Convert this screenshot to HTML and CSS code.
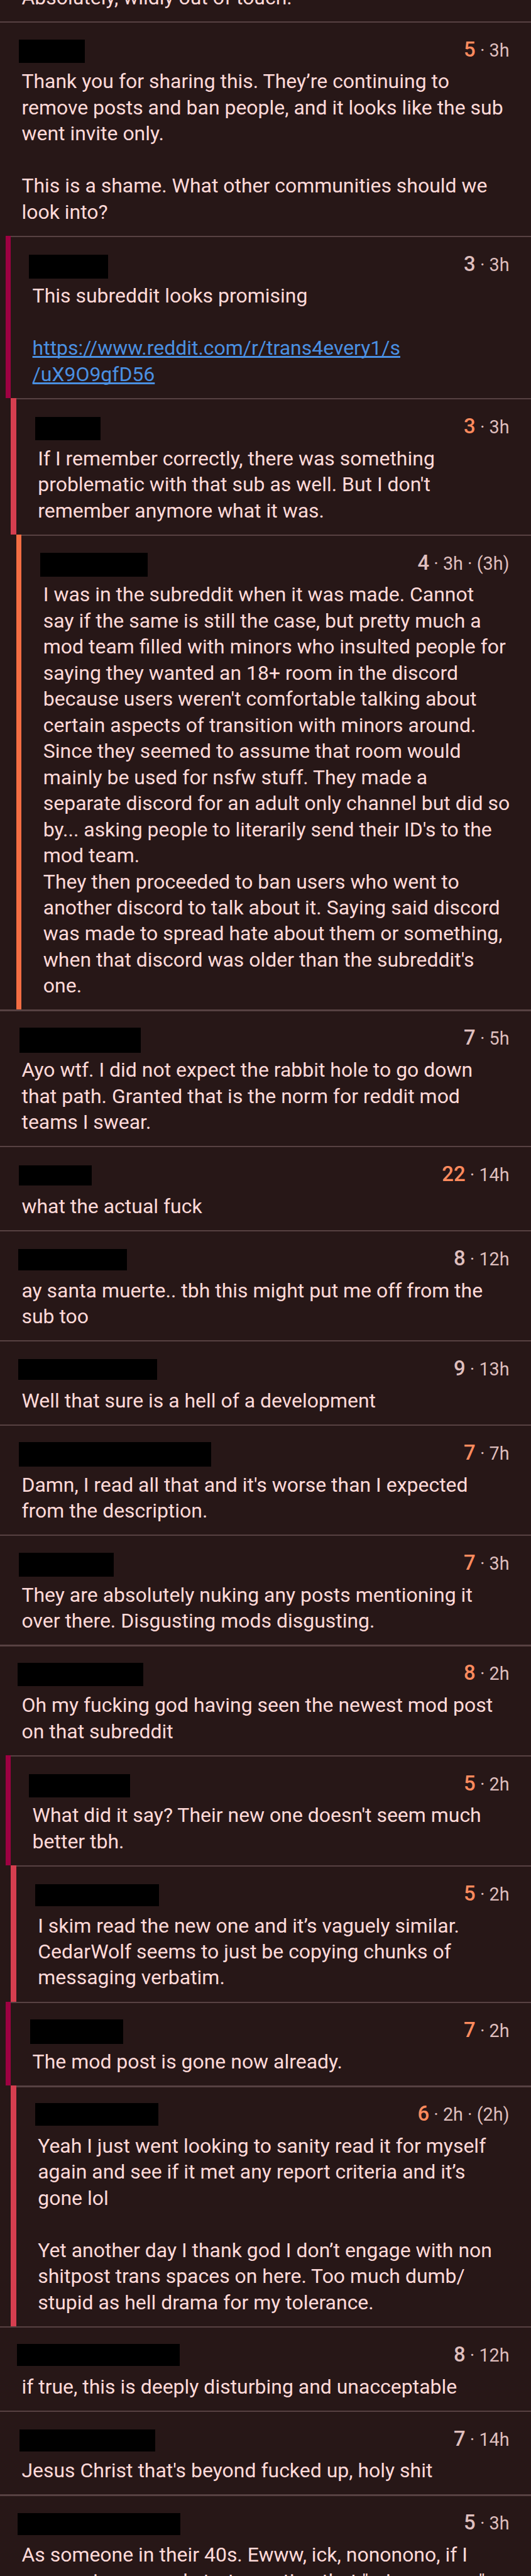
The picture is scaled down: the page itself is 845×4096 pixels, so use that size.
FILE: index.html
```html
<!DOCTYPE html>
<html lang="en">
<head>
<meta charset="utf-8">
<title>Comments</title>
<link rel="stylesheet" href="styles.css">
</head>
<body>
<main class="thread" id="thread">
<article class="comment first"><div class="main"><div class="text">Absolutely, wildly out of touch.</div></div></article>
</main>
<script src="thread.js"></script>
</body>
</html>
```
FILE: styles.css
```css
:root {
  --u: calc(845px / 1080);
  --bg: #271717;
  --divider: #574142;
  --text: #ffdad9;
  --muted: #dfbfbe;
  --accent: #ff8b5e;
  --link: #4a90e2;
}
html, body { margin: 0; background: var(--bg); }
body {
  height: 4096px;
  overflow: hidden;
  font-family: Roboto, "Liberation Sans", sans-serif;
  color: var(--text);
}
.thread {
  display: flex;
  flex-direction: column;
  margin-top: calc(-31.2 * var(--u));
}
.comment { display: flex; }
.rail { flex: none; width: calc(11 * var(--u)); }
.level-1 { padding-left: calc(11 * var(--u)); }
.level-2 { padding-left: calc(22 * var(--u)); }
.level-3 { padding-left: calc(33 * var(--u)); }
.level-1 .rail { background: #9e0142; }
.level-2 .rail { background: #d53e4f; }
.level-3 .rail { background: #f46d43; }
.main { flex: 1; min-width: 0; padding-bottom: calc(21.2 * var(--u)); }
.divider { height: calc(3 * var(--u)); background: var(--divider); }
.head {
  display: flex;
  justify-content: space-between;
  height: calc(93.8 * var(--u));
  padding: 0 calc(44 * var(--u));
}
.name {
  background: #000;
  width: calc(var(--w) * var(--u));
  height: calc(var(--h) * var(--u));
  margin-left: calc(var(--dx) * var(--u));
  margin-top: calc(var(--dy) * var(--u));
}
.meta {
  margin-top: calc(29 * var(--u));
  line-height: calc(53 * var(--u));
  font-size: calc(36.75 * var(--u));
  color: var(--muted);
  white-space: pre;
}
.score { font-size: calc(42 * var(--u)); font-weight: 500; }
.up { color: var(--accent); }
.text {
  padding-left: calc(44 * var(--u));
  font-size: calc(40.85 * var(--u));
  line-height: calc(53 * var(--u));
  white-space: pre;
}
.link { color: var(--link); text-decoration: underline; text-decoration-skip-ink: none; }
```
FILE: thread.js
```js
// level, name bar [dx, dy, w, h], score, upvoted, age, text
const comments = [
  [0, [-6, 34, 135, 48], "5", 1, "3h", "Thank you for sharing this. They’re continuing to\nremove posts and ban people, and it looks like the sub\nwent invite only.\n\nThis is a shame. What other communities should we\nlook into?"],
  [1, [-7, 36, 161, 48], "3", 0, "3h", "This subreddit looks promising\n\n<span class=\"link\">https://www.reddit.com/r/trans4every1/s\n/uX9O9gfD56</span>"],
  [2, [-5, 35, 132, 48], "3", 1, "3h", "If I remember correctly, there was something\nproblematic with that sub as well. But I don't\nremember anymore what it was."],
  [3, [-6, 35, 219, 48], "4", 0, "3h · (3h)", "I was in the subreddit when it was made. Cannot\nsay if the same is still the case, but pretty much a\nmod team filled with minors who insulted people for\nsaying they wanted an 18+ room in the discord\nbecause users weren't comfortable talking about\ncertain aspects of transition with minors around.\nSince they seemed to assume that room would\nmainly be used for nsfw stuff. They made a\nseparate discord for an adult only channel but did so\nby... asking people to literarily send their ID's to the\nmod team.\nThey then proceeded to ban users who went to\nanother discord to talk about it. Saying said discord\nwas made to spread hate about them or something,\nwhen that discord was older than the subreddit's\none."],
  [0, [-5, 33, 247, 52], "7", 0, "5h", "Ayo wtf. I did not expect the rabbit hole to go down\nthat path. Granted that is the norm for reddit mod\nteams I swear."],
  [0, [-6, 37, 148, 41], "22", 1, "14h", "what the actual fuck"],
  [0, [-7, 36, 221, 43], "8", 0, "12h", "ay santa muerte.. tbh this might put me off from the\nsub too"],
  [0, [-7, 35, 283, 42], "9", 0, "13h", "Well that sure is a hell of a development"],
  [0, [-6, 33, 392, 50], "7", 1, "7h", "Damn, I read all that and it's worse than I expected\nfrom the description."],
  [0, [-6, 34, 193, 49], "7", 1, "3h", "They are absolutely nuking any posts mentioning it\nover there. Disgusting mods disgusting."],
  [0, [-8, 33, 255, 48], "8", 1, "2h", "Oh my fucking god having seen the newest mod post\non that subreddit"],
  [1, [-7, 36, 206, 47], "5", 1, "2h", "What did it say? Their new one doesn't seem much\nbetter tbh."],
  [2, [-5, 35, 251, 45], "5", 1, "2h", "I skim read the new one and it’s vaguely similar.\nCedarWolf seems to just be copying chunks of\nmessaging verbatim."],
  [1, [-5, 34, 190, 49], "7", 1, "2h", "The mod post is gone now already."],
  [2, [-5, 33, 250, 46], "6", 1, "2h · (2h)", "Yeah I just went looking to sanity read it for myself\nagain and see if it met any report criteria and it’s\ngone lol\n\nYet another day I thank god I don’t engage with non\nshitpost trans spaces on here. Too much dumb/\nstupid as hell drama for my tolerance."],
  [0, [-10, 33, 332, 45], "8", 0, "12h", "if true, this is deeply disturbing and unacceptable"],
  [0, [-5, 36, 277, 45], "7", 0, "14h", "Jesus Christ that's beyond fucked up, holy shit"],
  [0, [-8, 35, 331, 45], "5", 0, "3h", "As someone in their 40s. Ewww, ick, nononono, if I\nonce going around start question that \"minor space\""]
];

document.getElementById("thread").insertAdjacentHTML("beforeend", comments.map(
  ([level, [dx, dy, w, h], score, up, age, text]) => `
<article class="comment level-${level}">
  ${level ? '<div class="rail"></div>' : ""}
  <div class="main">
    <div class="divider"></div>
    <div class="head">
      <div class="name" style="--dx:${dx};--dy:${dy};--w:${w};--h:${h}"></div>
      <div class="meta"><span class="score${up ? " up" : ""}">${score}</span> · ${age}</div>
    </div>
    <div class="text">${text}</div>
  </div>
</article>`).join(""));
```
